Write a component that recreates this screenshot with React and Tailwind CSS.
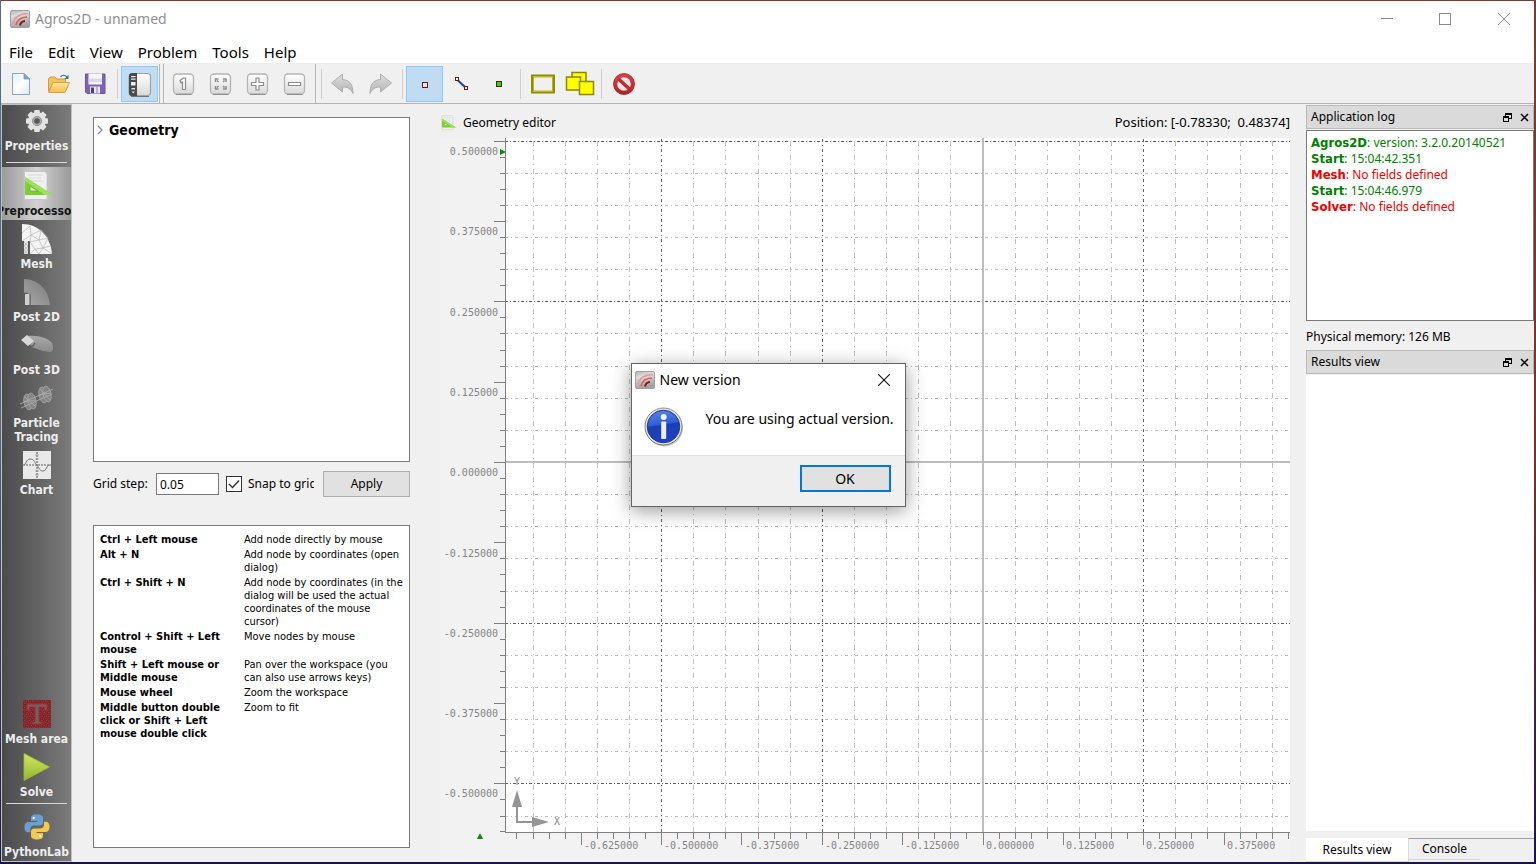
import React from "react";

const ui = "font-['Noto_Sans','Open_Sans',sans-serif]";
const condensed = "font-['DejaVu_Sans_Condensed','Noto_Sans',sans-serif]";

/* ---------- icons ---------- */

function AgrosLogo({ className }) {
  return (
    <svg viewBox="0 0 20 18" className={className} aria-hidden="true">
      <defs>
        <linearGradient id="logoBg" x1="0" y1="0" x2="0.3" y2="1">
          <stop offset="0" stopColor="#b4b4b4" />
          <stop offset="0.35" stopColor="#dedede" />
          <stop offset="1" stopColor="#a2a2a2" />
        </linearGradient>
      </defs>
      <rect x="0.500" y="0.500" width="19" height="17" rx="1.500" fill="url(#logoBg)" stroke="#a0a0a0" />
      <path d="M2.500 14C4 7.500 9 3.800 18 3.500" fill="none" stroke="#e39a9a" strokeWidth="1.500" />
      <path d="M6 15C7 10.500 10.500 7.200 17 7" fill="none" stroke="#d95c5c" strokeWidth="1.600" />
      <path d="M10 15.500C10.500 12.800 12 11.200 15 11" fill="none" stroke="#8d1a1a" strokeWidth="2" />
    </svg>
  );
}

function NewIcon() {
  return (
    <svg viewBox="0 0 24 24" className="h-6 w-6">
      <defs>
        <linearGradient id="pageG" x1="0" y1="0" x2="1" y2="1">
          <stop offset="0" stopColor="#e3edf8" />
          <stop offset="0.5" stopColor="#ffffff" />
          <stop offset="1" stopColor="#dbe8f7" />
        </linearGradient>
      </defs>
      <path d="M2.500 1.500H14L19.500 7V22.500H2.500Z" fill="url(#pageG)" stroke="#8aa4c4" />
      <path d="M14 1.500V7H19.500Z" fill="#7fa5d6" stroke="#7795bd" strokeWidth="0.800" />
    </svg>
  );
}

function OpenIcon() {
  return (
    <svg viewBox="0 0 24 24" className="h-6 w-6">
      <defs>
        <linearGradient id="folderG" x1="0" y1="0" x2="0" y2="1">
          <stop offset="0" stopColor="#fde39a" />
          <stop offset="1" stopColor="#f3c04e" />
        </linearGradient>
      </defs>
      <path d="M1.500 19.500V6.500L3 5H8L9.500 7H18.500V11H6Z" fill="#f0c35d" stroke="#d39c3a" />
      <path d="M6 10.500H22.500L18 20.500H1.800Z" fill="url(#folderG)" stroke="#d8a240" />
      <path d="M13.500 5C15 2.800 18 2.500 20 5" fill="none" stroke="#4d6d8c" strokeWidth="1.200" />
      <path d="M21.500 2.800V7H17.300Z" fill="#4d6d8c" />
    </svg>
  );
}

function SaveIcon() {
  return (
    <svg viewBox="0 0 24 24" className="h-6 w-6">
      <path d="M1.500 2H21V21.500H3L1.500 20Z" fill="#7c62bb" stroke="#6a54a8" />
      <rect x="4.500" y="1.500" width="13.500" height="11" fill="#f6f6f6" />
      <rect x="4.500" y="6.500" width="13.500" height="3.500" fill="#d9dbe0" />
      <rect x="6" y="14.500" width="10" height="7" fill="#e9e9ee" />
      <rect x="7" y="15.500" width="3" height="5.500" fill="#4c3c86" />
      <rect x="12.500" y="14.500" width="1" height="7" fill="#8d79c2" />
    </svg>
  );
}

function Defs() {
  return (
    <defs>
      <linearGradient id="keyG" x1="0" y1="0" x2="0" y2="1">
        <stop offset="0" stopColor="#ffffff" />
        <stop offset="1" stopColor="#d9d9d9" />
      </linearGradient>
    </defs>
  );
}

function PanelIcon() {
  return (
    <svg viewBox="0 0 26 26" className="h-[26px] w-[26px]">
      <Defs />
      <path d="M4 25.200H22" stroke="#6f6f6f" strokeWidth="1.500" />
      <rect x="2" y="2.500" width="21.500" height="22" rx="3.500" fill="url(#keyG)" stroke="#a2a2a2" strokeWidth="1.200" />
      <path d="M5 2H10V25H5Q2 25 2 22V5Q2 2 5 2Z" fill="#4a4a4a" />
      <rect x="4" y="5" width="4.500" height="1.200" fill="#eee" />
      <rect x="4" y="7.500" width="4.500" height="1.200" fill="#eee" />
      <rect x="4" y="11" width="4.500" height="3.500" fill="#eee" />
      <rect x="4.500" y="17" width="3.500" height="1.500" fill="#ddd" />
      <path d="M4.500 20.500H8L6.200 22.500Z" fill="#ddd" />
    </svg>
  );
}

function KeyIcon({ children }) {
  return (
    <svg viewBox="0 0 24 24" className="h-6 w-6">
      <Defs />
      <rect x="1.500" y="2" width="20" height="20" rx="3.500" fill="url(#keyG)" stroke="#b4b4b4" strokeWidth="1.300" />
      <path d="M4 22.500H19.500" stroke="#8f8f8f" strokeWidth="1" />
      <g fill="#fbfbfb" stroke="#8c8c8c" strokeWidth="1.200" strokeLinejoin="round" transform="translate(-0.500 0)">{children}</g>
    </svg>
  );
}

function UndoIcon({ flip }) {
  return (
    <svg viewBox="0 0 24 24" className="h-6 w-6">
      <defs>
        <linearGradient id="undoG" x1="0" y1="0" x2="0" y2="1">
          <stop offset="0" stopColor="#dedede" />
          <stop offset="1" stopColor="#b4b4b4" />
        </linearGradient>
      </defs>
      <g transform={flip ? "matrix(-1 0 0 1 24 0)" : undefined}>
        <path
          d="M0.500 11L11.500 2V7.500C18.500 8 22 12 22 21.500C19.500 16.500 17 15 11.500 15V20Z"
          fill="url(#undoG)"
          stroke="#aeaeae"
          strokeLinejoin="round"
        />
      </g>
    </svg>
  );
}

function NodeIcon() {
  return (
    <svg viewBox="0 0 24 24" className="h-6 w-6">
      <rect x="9.500" y="10.500" width="5" height="5" fill="#dfe9f2" stroke="#7a0f14" />
    </svg>
  );
}

function EdgeIcon() {
  return (
    <svg viewBox="0 0 24 24" className="h-6 w-6">
      <path d="M7 7.500L16.500 16.500" stroke="#0c4a8c" strokeWidth="2" />
      <rect x="5.500" y="5.500" width="3" height="3" fill="#fff" stroke="#7a0f14" />
      <rect x="14.500" y="14.500" width="3" height="3" fill="#fff" stroke="#7a0f14" />
    </svg>
  );
}

function LabelIcon() {
  return (
    <svg viewBox="0 0 24 24" className="h-6 w-6">
      <rect x="9.500" y="9.500" width="5" height="5" fill="#00f000" stroke="#7a0f14" />
    </svg>
  );
}

function RegionIcon() {
  return (
    <svg viewBox="0 0 24 20" className="h-5 w-6">
      <rect x="1" y="1.500" width="22" height="17" fill="#f0f0ee" stroke="#8f8c00" strokeWidth="2" />
      <rect x="2.500" y="3" width="19" height="14" fill="none" stroke="#b8b400" strokeWidth="1" />
    </svg>
  );
}

function SelectIcon() {
  return (
    <svg viewBox="0 0 30 26" className="h-[26px] w-[30px]">
      <g fill="#ffff00" stroke="#8a8700" strokeWidth="1.500">
        <rect x="7" y="1.500" width="14" height="13" />
        <rect x="1.500" y="6" width="14" height="13" />
        <rect x="14.500" y="10.500" width="14" height="13" />
      </g>
    </svg>
  );
}

function StopIcon() {
  return (
    <svg viewBox="0 0 24 24" className="h-6 w-6">
      <defs>
        <linearGradient id="stopG" x1="0" y1="0" x2="0" y2="1">
          <stop offset="0" stopColor="#d9474a" />
          <stop offset="1" stopColor="#b51d24" />
        </linearGradient>
      </defs>
      <circle cx="12" cy="12" r="10.500" fill="url(#stopG)" stroke="#9b2226" strokeWidth="0.800" />
      <circle cx="12" cy="12" r="6.800" fill="#ece6e6" />
      <path d="M6.500 7L17.500 17" stroke="#c02a2f" strokeWidth="3.600" />
    </svg>
  );
}

function GearIcon() {
  const teeth = [0, 45, 90, 135, 180, 225, 270, 315];
  return (
    <svg viewBox="0 0 32 32" className="h-8 w-8">
      {teeth.map((a) => (
        <rect key={a} x="13.200" y="5" width="5.600" height="6" rx="1" fill="#e4e4e4" transform={`rotate(${a} 16 16)`} />
      ))}
      <circle cx="16" cy="16" r="6.900" fill="none" stroke="#e2e2e2" strokeWidth="4.200" />
      <circle cx="16" cy="16" r="4.600" fill="#a9a9a9" />
      <circle cx="16" cy="16" r="2.800" fill="#585858" />
    </svg>
  );
}

function GeometryIcon({ className }) {
  return (
    <svg viewBox="0 0 32 32" className={className}>
      <path d="M3.500 1.500H24L26 4V29.500H3.500Z" fill="#f1f1f1" stroke="#c6c6c6" />
      <path d="M7 5H22M7 8H20M10 11H22" stroke="#d9d9d9" />
      <path d="M4 7L32 25H4Z" fill="#7cd032" />
      <path d="M4 7L32 25H24L4 11Z" fill="#9ee05c" />
      <path d="M9 16L17 21H9Z" fill="#eef5e6" stroke="#62b01d" strokeWidth="0.800" />
    </svg>
  );
}

function MeshIcon() {
  return (
    <svg viewBox="0 0 32 32" className="h-8 w-8">
      <g transform="translate(0 -1)">
        <path d="M1 2C18 2 30 15 31 32H9V19H1Z" fill="#f4f4f4" />
        <path d="M3 19H7V32H3Z" fill="#e4e4e4" />
        <path
          d="M1 11L9 4L10 13L1 19M10 13L20 8L18 18L10 13M9 20L18 18L27 16M18 18L22 26L29 24M9 20L14 27L22 26L31 32M14 27L9 32M14 27L18 32L22 26M3 20L7 24L3 28L7 32M7 20L3 24L7 28L3 32M10 13L9 20M20 8L27 16L22 26"
          fill="none"
          stroke="#b5b5b5"
          strokeWidth="0.700"
        />
      </g>
    </svg>
  );
}

function Post2DIcon() {
  return (
    <svg viewBox="0 0 32 32" className="h-8 w-8">
      <defs>
        <linearGradient id="p2d" x1="0" y1="1" x2="1" y2="0">
          <stop offset="0" stopColor="#a8a8a8" />
          <stop offset="1" stopColor="#7b7b7b" />
        </linearGradient>
      </defs>
      <path d="M3 3C17 3 28 14 29 29H9V17L3 16Z" fill="url(#p2d)" />
      <path d="M3 16Q9 15 9 21V29" fill="none" stroke="#909090" strokeWidth="2" />
      <rect x="4" y="18" width="4" height="11" fill="#cfcfcf" />
      <path d="M9.500 18V29" stroke="#707070" />
    </svg>
  );
}

function Post3DIcon() {
  return (
    <svg viewBox="0 0 32 32" className="h-8 w-8">
      <defs>
        <linearGradient id="p3d" x1="0" y1="0" x2="0" y2="1">
          <stop offset="0" stopColor="#a8a8a8" />
          <stop offset="1" stopColor="#8b8b8b" />
        </linearGradient>
      </defs>
      <path d="M6 7C18 6 27 9 31 14C33 19 32 23 29 23C22 23 15 19 10 18Z" fill="url(#p3d)" />
      <path d="M0 11L6 6L13 12L7 17Z" fill="#d8d8d8" />
      <path d="M7 18L12 17L14 14" stroke="#5a5a5a" strokeWidth="1.300" fill="none" />
    </svg>
  );
}

function ParticleIcon() {
  return (
    <svg viewBox="0 0 34 32" className="h-8 w-[34px]">
      <g fill="#858585" stroke="#a8a8a8" strokeWidth="0.800">
        <ellipse cx="8" cy="20" rx="4" ry="8" transform="rotate(-12 8 20)" />
        <ellipse cx="12" cy="19" rx="4" ry="8" transform="rotate(-12 12 19)" />
        <ellipse cx="23" cy="13" rx="4" ry="8" transform="rotate(-12 23 13)" />
        <ellipse cx="27" cy="12" rx="4" ry="8" transform="rotate(-12 27 12)" />
      </g>
      <path d="M0 22L33 7M1 26L32 12M5 15L15 24M20 7L30 18M4 20L16 18M19 13L31 11" stroke="#aaaaaa" strokeWidth="0.900" fill="none" />
    </svg>
  );
}

function ChartIcon() {
  return (
    <svg viewBox="0 0 32 32" className="h-8 w-8">
      <rect x="2" y="2" width="28" height="28" fill="#e9e9e9" />
      <path d="M2 16H30M16 3V29" stroke="#666" strokeWidth="1.200" strokeDasharray="2 1" />
      <path d="M3 16C5 16 5 10 9 10C14 10 13 14 16 16C18 18 18 22 22 22C26 22 25 16 29 16" fill="none" stroke="#777" />
      <path d="M14 6H18M14 10H18M14 22H18M14 26H18" stroke="#999" strokeWidth="0.700" />
    </svg>
  );
}

function MeshAreaIcon() {
  const dots = [];
  for (let r = 0; r < 13; r++) {
    for (let c = 0; c < 13; c++) {
      dots.push(<circle key={`${r}-${c}`} cx={3 + c * 2.17 + (r % 2) * 0.8} cy={3 + r * 2.17 + (c % 2) * 0.6} r="0.700" />);
    }
  }
  return (
    <svg viewBox="0 0 32 32" className="h-8 w-8">
      <rect x="2" y="2" width="28" height="28" fill="#93181e" />
      <g fill="#655a5b">{dots}</g>
      <path d="M6 6H26V12H23.500V9H18V24H21V26H11V24H14V9H8.500V12H6Z" fill="#6b6465" stroke="#b0262c" strokeWidth="1" />
    </svg>
  );
}

function SolveIcon() {
  return (
    <svg viewBox="0 0 32 32" className="h-8 w-8">
      <defs>
        <linearGradient id="playG" x1="0" y1="0" x2="0" y2="1">
          <stop offset="0" stopColor="#d3e763" />
          <stop offset="1" stopColor="#93b52b" />
        </linearGradient>
      </defs>
      <path d="M3 2.500L28.500 16L3 29.500Z" fill="url(#playG)" stroke="#9dbb35" strokeWidth="0.800" />
    </svg>
  );
}

function PythonIcon() {
  return (
    <svg viewBox="0 0 32 32" className="h-8 w-8">
      <path
        d="M15.800 3.500C10.500 3.500 10 5.500 10 7.200V10H16.300V11H7.300C4.500 11 3.500 13.500 3.500 16.200C3.500 19.500 4.800 21.300 7 21.300H9.300V18C9.300 15.800 11 14.500 13 14.500H18.800C20.500 14.500 22 13.200 22 11.500V7.200C22 5 20 3.500 15.800 3.500Z"
        fill="#6a9fd0"
      />
      <path
        d="M16.200 28.500C21.500 28.500 22 26.500 22 24.800V22H15.700V21H24.700C27.500 21 28.500 18.500 28.500 15.800C28.500 12.500 27.200 10.700 25 10.700H23V14C23 16 21.200 17.500 19.200 17.500H13.200C11.500 17.500 10 18.800 10 20.500V24.800C10 27 12 28.500 16.200 28.500Z"
        fill="#f3ca4f"
      />
      <circle cx="12.700" cy="7" r="1.200" fill="#fff" />
      <circle cx="19.300" cy="25" r="1.200" fill="#fff" />
    </svg>
  );
}

/* ---------- window chrome ---------- */

function TitleBar() {
  return (
    <header className="flex h-9 shrink-0 items-center bg-white pl-[9px]">
      <AgrosLogo className="h-[18px] w-5" />
      <h1 className="ml-[5px] flex-1 text-[14px] leading-5 text-[#8f8f8f]">Agros2D - unnamed</h1>
      <div className="flex text-[#8c8c8c]">
        <button aria-label="Minimize" className="grid h-9 w-[58px] place-items-center">
          <svg viewBox="0 0 12 12" className="h-3 w-3"><path d="M0 5.500H12" stroke="currentColor" /></svg>
        </button>
        <button aria-label="Maximize" className="grid h-9 w-[58px] place-items-center">
          <svg viewBox="0 0 12 12" className="h-3 w-3"><rect x="0.500" y="0.500" width="11" height="11" fill="none" stroke="currentColor" /></svg>
        </button>
        <button aria-label="Close" className="grid h-9 w-[60px] place-items-center">
          <svg viewBox="0 0 12 12" className="h-3 w-3"><path d="M0 0L12 12M12 0L0 12" stroke="currentColor" /></svg>
        </button>
      </div>
    </header>
  );
}

const menus = ["File", "Edit", "View", "Problem", "Tools", "Help"];

function MenuBar() {
  return (
    <nav className="flex h-[27px] shrink-0 items-center gap-[15px] border-b border-[#ececec] bg-white pl-2 pt-1">
      {menus.map((m) => (
        <button key={m} className="text-[15px] leading-5 text-black">{m}</button>
      ))}
    </nav>
  );
}

function ToolButton({ label, active, children }) {
  return (
    <button
      aria-label={label}
      className={`grid h-9 w-[37px] shrink-0 place-items-center ${active ? "border border-[#90c8f6] bg-[#c0dcf3]" : ""}`}
    >
      {children}
    </button>
  );
}

function ToolSep({ wide }) {
  return (
    <div className={`flex shrink-0 justify-center ${wide ? "w-2" : "w-[7px]"}`}>
      <div className="h-[30px] w-px bg-[#d0d0d0]" />
    </div>
  );
}

function Toolbar() {
  return (
    <div className="flex h-10 shrink-0 items-center border-b border-[#b4b4b4] bg-[#f0f0f0] pl-[2px]">
      <ToolButton label="New"><NewIcon /></ToolButton>
      <ToolButton label="Open"><OpenIcon /></ToolButton>
      <ToolButton label="Save"><SaveIcon /></ToolButton>
      <ToolSep />
      <ToolButton label="Show panel" active><PanelIcon /></ToolButton>
      <div className="flex h-full w-[7px] shrink-0 gap-[3px] pl-px">
        <div className="w-px bg-[#b8b8b8]" />
        <div className="w-px bg-[#b8b8b8]" />
      </div>
      <ToolButton label="Zoom 1:1">
        <KeyIcon><path d="M8.500 8.500L12 6H14V17.500H11V9.800L9.500 11Z" /></KeyIcon>
      </ToolButton>
      <ToolButton label="Zoom to fit">
        <KeyIcon>
          <g fill="none" stroke="#8a8a8a" strokeWidth="1.500">
            <path d="M7 10V7H10M14.500 7H17.500V10M17.500 14V17H14.500M10 17H7V14" />
            <path d="M8.500 8.500L10 10M16 8.500L14.500 10M16 15.500L14.500 14M8.500 15.500L10 14" />
          </g>
        </KeyIcon>
      </ToolButton>
      <ToolButton label="Zoom in">
        <KeyIcon><path d="M10.500 6H13.500V10.500H18V13.500H13.500V18H10.500V13.500H6V10.500H10.500Z" /></KeyIcon>
      </ToolButton>
      <ToolButton label="Zoom out">
        <KeyIcon><rect x="6" y="10.500" width="12" height="3" /></KeyIcon>
      </ToolButton>
      <div className="flex h-full w-[11px] shrink-0 items-center gap-[5px] pl-[2px]">
        <div className="h-full w-px bg-[#b8b8b8]" />
        <div className="h-[30px] w-px bg-[#d0d0d0]" />
      </div>
      <ToolButton label="Undo"><UndoIcon /></ToolButton>
      <ToolButton label="Redo"><UndoIcon flip /></ToolButton>
      <ToolSep wide />
      <ToolButton label="Nodes" active><NodeIcon /></ToolButton>
      <ToolButton label="Edges"><EdgeIcon /></ToolButton>
      <ToolButton label="Labels"><LabelIcon /></ToolButton>
      <ToolSep />
      <ToolButton label="Select region"><RegionIcon /></ToolButton>
      <ToolButton label="Transform"><SelectIcon /></ToolButton>
      <ToolSep />
      <ToolButton label="Delete"><StopIcon /></ToolButton>
    </div>
  );
}

/* ---------- left sidebar ---------- */

function SideItem({ icon, label, active }) {
  return (
    <button
      className={`flex w-full shrink-0 flex-col items-center gap-[2px] overflow-hidden pb-[2px] pt-[3px] text-[12px] font-bold leading-[14px] ${
        active
          ? "bg-linear-to-r from-[#9a9a9a] via-[#d2d2d2] to-[#9a9a9a] text-[#151515]"
          : "text-[#ededed]"
      }`}
    >
      {icon}
      <span className="whitespace-pre text-center">{label}</span>
    </button>
  );
}

function SideRule() {
  return <div className="mx-1 h-px shrink-0 bg-[#d8d8d8]" />;
}

function Sidebar() {
  return (
    <aside className={`flex w-[71px] shrink-0 flex-col border border-[#c2c2c2] bg-linear-to-r from-[#4b4b4b] to-[#7b7b7b] ${condensed}`}>
      <div className="flex h-[57px] shrink-0 flex-col justify-end pb-[7px]">
        <SideItem icon={<GearIcon />} label="Properties" />
      </div>
      <SideRule />
      <div className="h-1 shrink-0" />
      <SideItem icon={<GeometryIcon className="h-8 w-8" />} label="Preprocessor" active />
      <SideItem icon={<MeshIcon />} label="Mesh" />
      <SideItem icon={<Post2DIcon />} label="Post 2D" />
      <SideItem icon={<Post3DIcon />} label="Post 3D" />
      <SideItem icon={<ParticleIcon />} label={"Particle\nTracing"} />
      <SideItem icon={<ChartIcon />} label="Chart" />
      <div className="flex-1" />
      <SideItem icon={<MeshAreaIcon />} label="Mesh area" />
      <SideItem icon={<SolveIcon />} label="Solve" />
      <div className="h-[2px] shrink-0" />
      <SideRule />
      <div className="h-1 shrink-0" />
      <SideItem icon={<PythonIcon />} label="PythonLab" />
    </aside>
  );
}

/* ---------- preprocessor panel ---------- */

const shortcuts = [
  ["Ctrl + Left mouse", "Add node directly by mouse"],
  ["Alt + N", "Add node by coordinates (open dialog)"],
  ["Ctrl + Shift + N", "Add node by coordinates (in the dialog will be used the actual coordinates of the mouse cursor)"],
  ["Control + Shift + Left mouse", "Move nodes by mouse"],
  ["Shift + Left mouse or Middle mouse", "Pan over the workspace (you can also use arrows keys)"],
  ["Mouse wheel", "Zoom the workspace"],
  ["Middle button double click or Shift + Left mouse double click", "Zoom to fit"],
];

function PreprocessorPanel() {
  return (
    <section className="flex w-[317px] shrink-0 flex-col pb-[14px] pt-[13px] text-[12px] text-black">
      <div className="h-[345px] shrink-0 border border-[#7a7a7a] bg-white pl-[2px] pt-[2px]">
        <button className={`flex h-5 items-center gap-[5px] text-[14px] font-bold leading-5 ${condensed}`}>
          <svg viewBox="0 0 8 10" className="h-[10px] w-2">
            <path d="M2 1L6 5L2 9" fill="none" stroke="#8b8b8b" strokeWidth="1.300" />
          </svg>
          Geometry
        </button>
      </div>
      <div className="flex h-11 shrink-0 items-center">
        <label htmlFor="grid-step" className="w-[63px] whitespace-nowrap">Grid step:</label>
        <input
          id="grid-step"
          defaultValue="0.05"
          className="h-[22px] w-[63px] border border-[#7a7a7a] bg-white px-[3px] text-[12px] outline-none"
        />
        <label className="ml-[7px] flex w-[88px] items-center gap-[6px] overflow-hidden whitespace-nowrap">
          <span className="grid h-4 w-4 shrink-0">
            <input type="checkbox" defaultChecked className="peer col-start-1 row-start-1 h-4 w-4 appearance-none border border-[#333] bg-white" />
            <svg viewBox="0 0 16 16" className="pointer-events-none invisible col-start-1 row-start-1 h-4 w-4 peer-checked:visible">
              <path d="M3 8L6.500 11.500L13 4.500" fill="none" stroke="#333" strokeWidth="1.400" />
            </svg>
          </span>
          Snap to grid
        </label>
        <button className="ml-[9px] h-[26px] flex-1 border border-[#adadad] bg-[#e1e1e1]">Apply</button>
      </div>
      <div className={`mt-[19px] flex-1 border border-[#7a7a7a] bg-white px-[6px] pt-[7px] ${condensed}`}>
        <table className="w-full table-fixed text-left align-top text-[11px] leading-[13px]">
          <tbody>
            {shortcuts.map(([k, d]) => (
              <tr key={k}>
                <th className="w-[144px] pb-[2px] pr-5 align-top font-bold">{k}</th>
                <td className="pb-[2px] align-top">{d}</td>
              </tr>
            ))}
          </tbody>
        </table>
      </div>
    </section>
  );
}

/* ---------- geometry editor ---------- */

const STEP = 80.35;
const AXIS_X = 65;
const AXIS_Y = 694;
const ORIGIN_X = 543;
const ORIGIN_Y = 324;

const yLabels = ["0.500000", "0.375000", "0.250000", "0.125000", "0.000000", "-0.125000", "-0.250000", "-0.375000", "-0.500000"];
const xLabels = ["-0.625000", "-0.500000", "-0.375000", "-0.250000", "-0.125000", "0.000000", "0.125000", "0.250000", "0.375000"];

function range(a, b) {
  const out = [];
  for (let i = a; i <= b; i++) out.push(i);
  return out;
}

function GeometryCanvas() {
  const cols = range(-14, 9);
  const rows = range(-10, 11);
  const fine = STEP / 5;
  return (
    <svg className="block h-full w-full font-['DejaVu_Sans_Mono','Liberation_Mono',monospace] text-[10px]" role="img" aria-label="Geometry grid">
      <rect width="100%" height="100%" fill="#f2f2f2" />
      <rect x={AXIS_X} width="100%" height={AXIS_Y} fill="#ffffff" />
      <g shapeRendering="crispEdges" fill="none">
        {rows.filter((i) => i !== 0).map((i) => {
          const y = Math.round(ORIGIN_Y + i * fine * 2) + 0.5;
          return y < AXIS_Y ? (
            <line key={`r${i}`} x1={AXIS_X} x2="100%" y1={y} y2={y} stroke={i % 5 === 0 ? "#606060" : "#c0c0c0"} strokeDasharray={i % 5 === 0 ? "3 2 1 2" : "3 3 1 3"} />
          ) : null;
        })}
        {cols.filter((i) => i !== 0).map((i) => {
          const x = Math.floor(ORIGIN_X + i * fine * 2) + 0.5;
          return (
            <line key={`c${i}`} x1={x} x2={x} y1={AXIS_Y} y2="0" stroke={i % 5 === 0 ? "#606060" : "#c0c0c0"} strokeDasharray={i % 5 === 0 ? "3 3 1 3" : "5 4 1 4"} />
          );
        })}
        <line x1={AXIS_X} x2="100%" y1={ORIGIN_Y} y2={ORIGIN_Y} stroke="#bdbdbd" strokeWidth="2" />
        <line x1={ORIGIN_X} x2={ORIGIN_X} y1="0" y2={AXIS_Y} stroke="#bdbdbd" strokeWidth="2" />
        <g stroke="#808080">
          <line x1={AXIS_X + 0.5} x2={AXIS_X + 0.5} y1="0" y2={AXIS_Y} />
          <line x1={AXIS_X} x2="100%" y1={AXIS_Y + 0.5} y2={AXIS_Y + 0.5} />
          {range(-20, 22).map((i) => {
            const y = Math.round(ORIGIN_Y + i * fine) + 0.5;
            return <line key={`ty${i}`} x1={AXIS_X - (i % 5 === 0 ? 11 : 5)} x2={AXIS_X} y1={y} y2={y} />;
          })}
          <line x1={AXIS_X - 5} x2={AXIS_X} y1={AXIS_Y - 0.5} y2={AXIS_Y - 0.5} />
          {range(-29, 19).map((i) => {
            const x = Math.floor(ORIGIN_X + i * fine) + 0.5;
            return <line key={`tx${i}`} x1={x} x2={x} y1={AXIS_Y} y2={AXIS_Y + (i % 5 === 0 ? 13 : 7)} />;
          })}
        </g>
      </g>
      <g fill="#858585">
        {yLabels.map((t, i) => (
          <text key={t} x="58" y={Math.round(17 + i * 80.3)} textAnchor="end">{t}</text>
        ))}
        {xLabels.map((t, i) => (
          <text key={t} x={Math.round(144 + i * STEP)} y={AXIS_Y + 17}>{t}</text>
        ))}
        <text x="74" y="647">Y</text>
        <text x="114" y="687">X</text>
      </g>
      <g fill="#959595" stroke="none">
        <path d="M76 660H78V683H98V685H76Z" />
        <path d="M77 652L82 669H72Z" />
        <path d="M109 684L92 679V689Z" />
      </g>
      <path d="M60 11L66 14L60 17Z" fill="#0a8a0a" />
      <path d="M40 695L43 701H37Z" fill="#0a8a0a" />
    </svg>
  );
}

function GeometryEditor() {
  return (
    <section className="flex min-w-0 flex-1 flex-col text-[12px] text-black">
      <div className="flex h-[34px] shrink-0 items-center pt-1">
        <GeometryIcon className="h-4 w-4" />
        <h2 className="ml-[7px] flex-1">Geometry editor</h2>
        <span className="whitespace-pre text-[13px]">Position: [-0.78330;  0.48374]</span>
      </div>
      <div className="min-h-0 flex-1 overflow-hidden">
        <GeometryCanvas />
      </div>
    </section>
  );
}

/* ---------- right dock ---------- */

function DockHeader({ title }) {
  return (
    <div className="flex h-6 shrink-0 items-center border border-[#b9b9b9] bg-[#dadada] pl-1 pr-1">
      <h2 className="flex-1">{title}</h2>
      <button aria-label={`Float ${title}`} className="mr-2">
        <svg viewBox="0 0 9 9" className="h-[9px] w-[9px]" shapeRendering="crispEdges">
          <path d="M2.500 4V0.500H8.500V5.500H6M2 1.500H9" fill="none" stroke="#000" />
          <path d="M0.500 3.500H5.500V8.500H0.500ZM0 4.500H6" fill="none" stroke="#000" />
        </svg>
      </button>
      <button aria-label={`Close ${title}`}>
        <svg viewBox="0 0 9 9" className="h-[9px] w-[9px]">
          <path d="M1 1L8 8M8 1L1 8" stroke="#000" strokeWidth="1.500" />
        </svg>
      </button>
    </div>
  );
}

const log = [
  { who: "Agros2D", text: "version: 3.2.0.20140521", ok: true },
  { who: "Start", text: "15:04:42.351", ok: true },
  { who: "Mesh", text: "No fields defined", ok: false },
  { who: "Start", text: "15:04:46.979", ok: true },
  { who: "Solver", text: "No fields defined", ok: false },
];

function RightDock() {
  return (
    <aside className="flex w-[228px] shrink-0 flex-col pt-px text-[12px] text-black">
      <DockHeader title="Application log" />
      <div className="mt-px h-[191px] shrink-0 border border-[#7a7a7a] bg-white pl-1 pt-1 leading-4">
        {log.map((l, i) => (
          <p key={i} className={`h-4 whitespace-nowrap ${l.ok ? "text-[#008000]" : "text-[#f00000]"}`}>
            <b className={`text-[13px] ${condensed}`}>{l.who}</b>: {l.text}
          </p>
        ))}
      </div>
      <p className="flex h-[29px] shrink-0 items-center pt-[2px]">Physical memory: 126 MB</p>
      <DockHeader title="Results view" />
      <div className="mb-[7px] mt-px flex-1 bg-white" />
      <div className="flex h-6 shrink-0" role="tablist">
        <button role="tab" aria-selected="true" className="h-6 w-[102px] border-b border-[#d9d9d9] bg-white">Results view</button>
        <div className="flex-1 border-l border-t border-l-[#d9d9d9] border-t-[#a0a0a0]">
          <button role="tab" aria-selected="false" className="h-[21px] w-[71px] border-b border-[#d9d9d9]">Console</button>
        </div>
      </div>
    </aside>
  );
}

/* ---------- dialog ---------- */

function InfoIcon() {
  return (
    <svg viewBox="0 0 40 40" className="h-10 w-10">
      <defs>
        <linearGradient id="infoRing" x1="0" y1="0" x2="0" y2="1">
          <stop offset="0" stopColor="#8d8d8d" />
          <stop offset="1" stopColor="#6f6f6f" />
        </linearGradient>
        <linearGradient id="infoG" x1="0" y1="0" x2="0.150" y2="1">
          <stop offset="0" stopColor="#5c86ea" />
          <stop offset="0.480" stopColor="#2f5fd6" />
          <stop offset="0.520" stopColor="#1a3fae" />
          <stop offset="1" stopColor="#2040c8" />
        </linearGradient>
      </defs>
      <circle cx="20.500" cy="21" r="18.500" fill="#c9c9c9" />
      <circle cx="19.500" cy="19.500" r="18.500" fill="#e8e8e8" stroke="url(#infoRing)" strokeWidth="1" />
      <circle cx="19.500" cy="19.500" r="16.300" fill="url(#infoG)" stroke="#1c3690" />
      <circle cx="19.700" cy="10" r="3" fill="#f5f5f5" />
      <rect x="17.200" y="14.500" width="5" height="17.500" rx="0.800" fill="#eeeeee" />
    </svg>
  );
}

function VersionDialog() {
  return (
    <div className="pointer-events-none absolute inset-0 flex items-center justify-center pr-px pt-[6px]">
      <div
        role="dialog"
        aria-labelledby="dlg-title"
        className="pointer-events-auto w-[275px] border border-[#636363] bg-white text-[14px] text-black shadow-[0_4px_18px_rgba(0,0,0,0.4)]"
      >
        <div className="flex h-[31px] items-center pl-[3px]">
          <AgrosLogo className="h-[18px] w-5" />
          <h2 id="dlg-title" className="ml-[5px] flex-1 leading-5">New version</h2>
          <button aria-label="Close dialog" className="grid h-[30px] w-[42px] place-items-center">
            <svg viewBox="0 0 12 12" className="h-3 w-3"><path d="M0 0L12 12M12 0L0 12" stroke="#111" strokeWidth="1.100" /></svg>
          </button>
        </div>
        <div className="flex h-[60px] items-start pl-3 pt-3">
          <InfoIcon />
          <p className="ml-[22px] whitespace-nowrap leading-6">You are using actual version.</p>
        </div>
        <div className="flex h-[51px] justify-end border-t border-[#dfdfdf] bg-[#f0f0f0] pr-[14px] pt-[9px]">
          <button className="h-[27px] w-[91px] border-2 border-[#0078d7] bg-[#e1e1e1]">OK</button>
        </div>
      </div>
    </div>
  );
}

export default function App() {
  return (
    <div className={`flex h-screen min-h-[700px] bg-linear-to-b from-[#4f6f8a] via-[#5a5f80] to-[#1b1446] pl-px ${ui}`}>
      <div className="relative flex min-w-0 flex-1 flex-col bg-linear-to-b from-[#7a3b2e] via-[#8a2a26] to-[#1b1446] pb-[2px] pr-[2px] pt-px">
        <TitleBar />
        <MenuBar />
        <Toolbar />
        <main className="flex min-h-0 flex-1 bg-[#f0f0f0]">
          <Sidebar />
          <div className="w-[21px] shrink-0" />
          <PreprocessorPanel />
          <div className="w-[30px] shrink-0" />
          <GeometryEditor />
          <div className="w-4 shrink-0" />
          <RightDock />
        </main>
        <VersionDialog />
      </div>
    </div>
  );
}
